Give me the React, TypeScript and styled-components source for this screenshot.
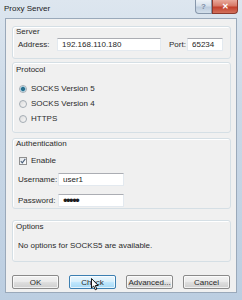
import styled, { createGlobalStyle } from "styled-components";

const GlobalStyle = createGlobalStyle`
  body {
    margin: 0;
    font-family: "Liberation Sans", Arial, sans-serif;
    color: #2a2a2a;
  }
`;

const Window = styled.div`
  width: 242px;
  height: 300px;
  box-sizing: border-box;
  display: flex;
  flex-direction: column;
  padding: 0 5px 7px;
  overflow: hidden;
  background: linear-gradient(180deg, #dde6ef 0%, #cbd9e7 35%, #bccee1 100%);
`;

const TitleBar = styled.div`
  height: 18px;
  display: flex;
  align-items: flex-start;
`;

const Title = styled.span`
  font-size: 8px;
  line-height: 10px;
  margin: 4px 0 0 -1px;
  color: #1b1b1b;
`;

const CaptionButton = styled.div<{ $close?: boolean }>`
  height: 14px;
  width: ${(p) => (p.$close ? "26px" : "17px")};
  margin-left: ${(p) => (p.$close ? "0" : "auto")};
  margin-right: ${(p) => (p.$close ? "-1px" : "0")};
  box-sizing: border-box;
  border: 1px solid ${(p) => (p.$close ? "#8d3a2e" : "#8797ab")};
  border-top: none;
  border-radius: ${(p) => (p.$close ? "0 0 4px 0" : "0 0 0 4px")};
  background: ${(p) =>
    p.$close
      ? "linear-gradient(180deg, #e9a99b 0%, #d77967 45%, #c3402c 55%, #d2715c 100%)"
      : "linear-gradient(180deg, #eef3f8 0%, #d6e0eb 45%, #bccbdc 55%, #d3dfeb 100%)"};
  display: flex;
  align-items: center;
  justify-content: center;
  font-size: 8px;
  font-weight: bold;
  color: ${(p) => (p.$close ? "#ffffff" : "#7d8ea4")};
`;

const Client = styled.div`
  flex: 1;
  background: #f0f0f0;
  border: 1px solid #9aa9ba;
  padding: 7px 5px 0 6px;
  display: flex;
  flex-direction: column;
  position: relative;
`;

const Group = styled.div<{ $top: number; $h: number }>`
  margin-top: ${(p) => p.$top}px;
  height: ${(p) => p.$h}px;
  box-sizing: border-box;
  border: 1px solid #d5dfe5;
  border-radius: 3px;
  box-shadow: inset 1px 1px 0 #ffffff;
  display: flex;
  flex-direction: column;
`;

const GroupLabel = styled.div<{ $pad: number }>`
  font-size: 8px;
  line-height: 10px;
  padding: ${(p) => p.$pad}px 0 0 3px;
`;

const Row = styled.div<{ $gap: number; $h: number }>`
  margin-top: ${(p) => p.$gap}px;
  height: ${(p) => p.$h}px;
  display: flex;
  align-items: center;
  padding-left: 5px;
  font-size: 8px;
`;

const FieldLabel = styled.span<{ $w: number; $left?: number }>`
  width: ${(p) => p.$w}px;
  margin-left: ${(p) => p.$left ?? 0}px;
  flex: none;
  white-space: nowrap;
`;

const TextBox = styled.input<{ $w: number; $dots?: boolean }>`
  width: ${(p) => p.$w}px;
  height: 13px;
  box-sizing: border-box;
  border: 1px solid #e3e9ef;
  border-top-color: #abadb3;
  background: #ffffff;
  font-family: inherit;
  font-size: ${(p) => (p.$dots ? "13px" : "8px")};
  line-height: 11px;
  letter-spacing: ${(p) => (p.$dots ? "-1.5px" : "0")};
  padding: 0 0 0 4px;
  margin: 0;
  color: #1e1e1e;
  outline: none;
`;

const Radio = styled.span<{ $on?: boolean }>`
  width: 8px;
  height: 8px;
  box-sizing: border-box;
  border-radius: 50%;
  border: 1px solid #a4acb4;
  background: ${(p) =>
    p.$on
      ? "radial-gradient(circle, #2a6f8e 0 1.6px, #76b6cf 2.2px, #e8eef2 3px)"
      : "linear-gradient(135deg, #dcdcdc, #f8f8f8)"};
  margin: 0 4px 0 1px;
  flex: none;
`;

const Check = styled.span`
  width: 8px;
  height: 8px;
  box-sizing: border-box;
  border: 1px solid #8f8f8f;
  background: linear-gradient(135deg, #e0e4e8, #ffffff);
  margin: 0 4px 0 1px;
  flex: none;
  display: flex;
  align-items: center;
  justify-content: center;
`;

const Note = styled.div`
  margin-top: 9px;
  padding-left: 5px;
  font-size: 8px;
  line-height: 10px;
`;

const ButtonRow = styled.div`
  margin-top: 13px;
  display: flex;
  gap: 10px;
`;

const Button = styled.div<{ $hot?: boolean }>`
  position: relative;
  width: 47px;
  height: 14px;
  box-sizing: border-box;
  border: 1px solid ${(p) => (p.$hot ? "#3c7fb1" : "#8a8a8a")};
  border-radius: 2px;
  background: ${(p) =>
    p.$hot
      ? "linear-gradient(180deg, #eaf6fd 0%, #d9f0fc 45%, #bee6fd 55%, #a7d9f5 100%)"
      : "linear-gradient(180deg, #f2f2f2 0%, #ebebeb 45%, #dddddd 55%, #cfcfcf 100%)"};
  box-shadow: inset 0 0 0 1px rgba(255, 255, 255, 0.7);
  font-size: 8px;
  display: flex;
  align-items: center;
  justify-content: center;
`;

const Pointer = styled.svg`
  position: absolute;
  left: 21px;
  top: 2px;
`;

export default function App() {
  return (
    <Window>
      <GlobalStyle />
      <TitleBar>
        <Title>Proxy Server</Title>
        <CaptionButton>?</CaptionButton>
        <CaptionButton $close>✕</CaptionButton>
      </TitleBar>
      <Client>
        <Group $top={0} $h={33}>
          <GroupLabel $pad={0}>Server</GroupLabel>
          <Row $gap={1} $h={13}>
            <FieldLabel $w={39}>Address:</FieldLabel>
            <TextBox $w={104} readOnly value="192.168.110.180" />
            <FieldLabel $w={18} $left={8}>Port:</FieldLabel>
            <TextBox $w={36} readOnly value="65234" />
          </Row>
        </Group>

        <Group $top={3} $h={71}>
          <GroupLabel $pad={2}>Protocol</GroupLabel>
          <Row $gap={6} $h={15}>
            <Radio $on />
            SOCKS Version 5
          </Row>
          <Row $gap={0} $h={15}>
            <Radio />
            SOCKS Version 4
          </Row>
          <Row $gap={0} $h={15}>
            <Radio />
            HTTPS
          </Row>
        </Group>

        <Group $top={5} $h={71}>
          <GroupLabel $pad={0}>Authentication</GroupLabel>
          <Row $gap={4} $h={15}>
            <Check>
              <svg width="6" height="6" viewBox="0 0 6 6">
                <path d="M0.8 3.2 L2.3 4.8 L5.3 0.8" fill="none" stroke="#4a5f7a" strokeWidth="1.1" />
              </svg>
            </Check>
            Enable
          </Row>
          <Row $gap={4} $h={14}>
            <FieldLabel $w={40}>Username:</FieldLabel>
            <TextBox $w={66} readOnly value="user1" />
          </Row>
          <Row $gap={7} $h={14}>
            <FieldLabel $w={40}>Password:</FieldLabel>
            <TextBox $w={66} $dots readOnly type="password" value="12345" />
          </Row>
        </Group>

        <Group $top={11} $h={42}>
          <GroupLabel $pad={1}>Options</GroupLabel>
          <Note>No options for SOCKS5 are available.</Note>
        </Group>

        <ButtonRow>
          <Button>OK</Button>
          <Button $hot>
            Check
            <Pointer width="8" height="13" viewBox="0 0 8 13">
              <path
                d="M0.5 0.5 L0.5 10 L2.7 8 L4.3 11.8 L5.8 11.1 L4.3 7.5 L7.2 7.5 Z"
                fill="#ffffff"
                stroke="#000000"
                strokeWidth="0.9"
                strokeLinejoin="round"
              />
            </Pointer>
          </Button>
          <Button>Advanced...</Button>
          <Button>Cancel</Button>
        </ButtonRow>
      </Client>
    </Window>
  );
}
